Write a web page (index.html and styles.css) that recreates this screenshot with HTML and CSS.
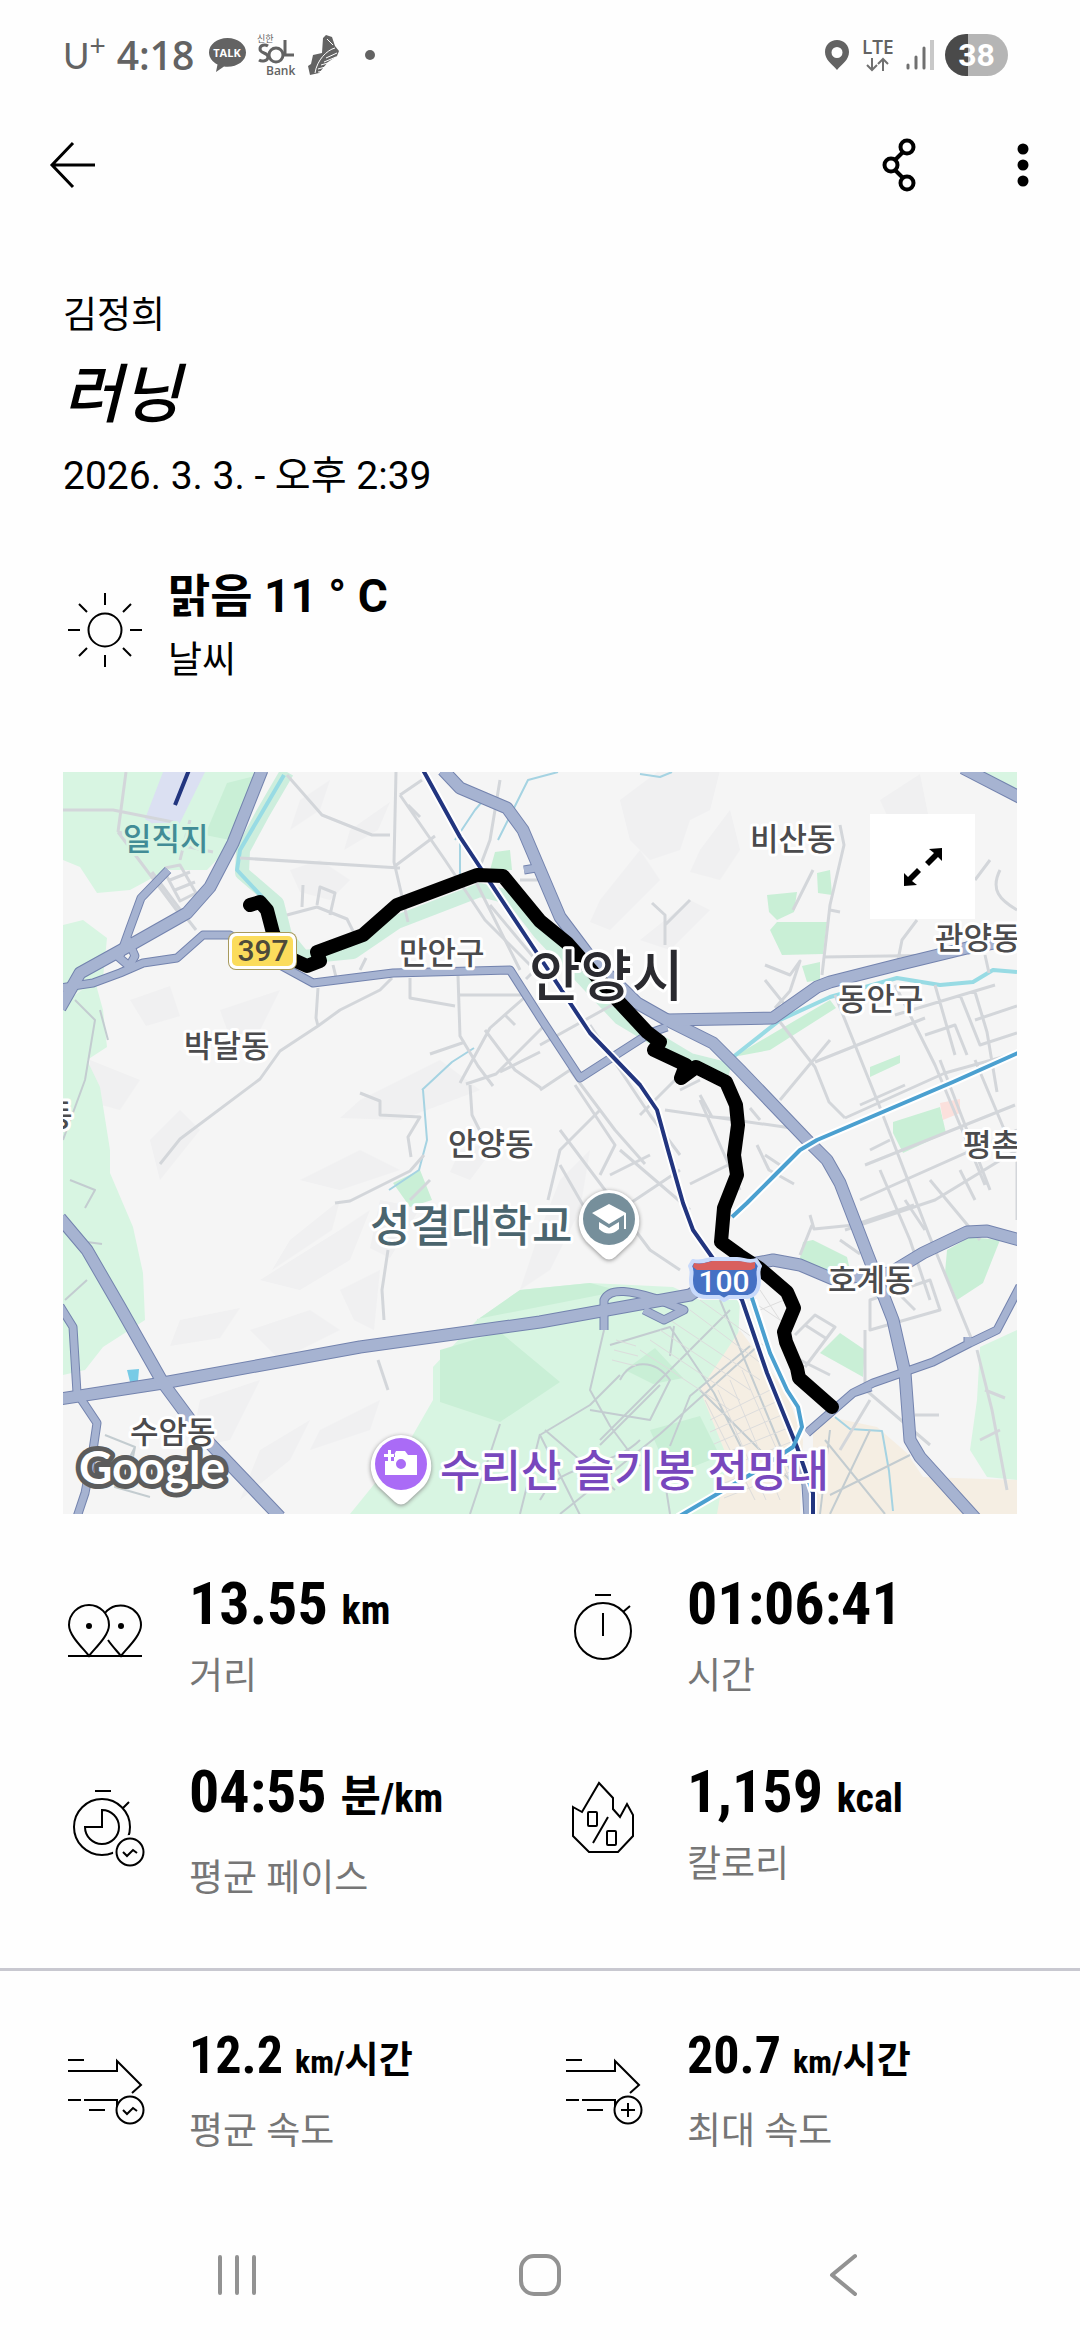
FILE: index.html
```
<!DOCTYPE html>
<html lang="ko">
<head>
  <meta charset="utf-8">
  <meta name="viewport" content="width=device-width">
  <title>러닝</title>
  <link rel="stylesheet" href="styles.css">
</head>
<body>
  <!-- Phone status bar -->
  <div class="status">
    <div class="status-group">
      <span class="carrier">U<sup>+</sup></span>
      <span class="clock">4:18</span>
      <svg class="talk" width="37" height="36" viewBox="0 0 37 36">
        <path fill="#636363" d="M18.500 1C8 1 0 7.500 0 15.500c0 5 3.500 9.500 8.500 12L7 35l8-5.500c12 1.500 22-5 22-14C37 7.500 29 1 18.500 1z"/>
        <text x="18" y="20" font-size="11">TALK</text>
      </svg>
      <svg class="sol" width="40" height="46" viewBox="0 0 40 46">
        <text x="0" y="10" font-size="9">신한</text>
        <path fill="none" stroke="#636363" stroke-width="3" d="M11 14c-3-2-8-1-8 3 0 5 8 3 8 8 0 4-6 5-9 3M28 8v15h9"/>
        <circle cx="19" cy="23" r="7" fill="none" stroke="#636363" stroke-width="3"/>
        <text x="9" y="43" font-size="12" font-weight="600">Bank</text>
      </svg>
      <svg class="shoe" width="32" height="40" viewBox="0 0 32 40">
        <path fill="#636363" d="M15 3l3-3 6 2 3 9 4 5-2 5-9 6-9 11-9 2-2-9 3-2 2-9 9-2z"/>
        <path fill="none" stroke="#fff" stroke-width="1" d="M27 13c-8 2-18 12-20 25M29 18l-11 5M28 22l-12 5M23 27l-10 3M21 31l-11 3M21 35l-11 2M19 4l6 6"/>
      </svg>
      <span class="more-dot"></span>
    </div>
    <div class="status-group">
      <svg width="26" height="32" viewBox="0 0 26 32">
        <path fill="#636363" fill-rule="evenodd" d="M13 1C6 1 1 6 1 13c0 8 7 12 12 18 5-6 12-10 12-18C25 6 20 1 13 1zm0 7a5.500 5.500 0 1 1 0 11 5.500 5.500 0 0 1 0-11z"/>
      </svg>
      <svg class="lte" width="34" height="36" viewBox="0 0 34 36">
        <text x="1" y="17" font-size="19">LTE</text>
        <path fill="none" stroke="#707070" stroke-width="2" d="M11 21v12M6 28l5 5 5-5M22 34V22M17 27l5-5 5 5"/>
      </svg>
      <svg width="28" height="32" viewBox="0 0 28 32">
        <path stroke="#707070" stroke-width="3" stroke-linecap="round" d="M2 26v3M10 18v11M18 9v20"/>
        <path stroke="#c8c8c8" stroke-width="4" d="M26 1v30"/>
      </svg>
      <span class="battery">38</span>
    </div>
  </div>

  <header>
    <button class="icon-btn" aria-label="뒤로">
      <svg width="48" height="48" viewBox="0 0 48 48" fill="none" stroke="#000" stroke-width="3"><path d="M24 2L3 24l21 22M3 24h43"/></svg>
    </button>
    <div class="header-actions">
      <button class="icon-btn" aria-label="공유">
        <svg width="36" height="56" viewBox="0 0 36 56" fill="none" stroke="#000" stroke-width="4"><circle cx="26" cy="10" r="6.500"/><circle cx="10" cy="28" r="6.500"/><circle cx="26" cy="46" r="6.500"/><path d="M14 23l8-8M14 33l8 8"/></svg>
      </button>
      <button class="icon-btn" aria-label="메뉴">
        <svg width="12" height="48" viewBox="0 0 12 48"><circle cx="6" cy="8" r="5.500"/><circle cx="6" cy="24" r="5.500"/><circle cx="6" cy="40" r="5.500"/></svg>
      </button>
    </div>
  </header>

  <main>
    <section class="summary">
      <p class="user">김정희</p>
      <h1>러닝</h1>
      <p class="date">2026. 3. 3. - 오후 2:39</p>
      <div class="weather">
        <svg class="icon" viewBox="0 0 84 84">
          <circle cx="42" cy="42" r="16.500"/>
          <path d="M42 5v12M42 67v12M5 42h12M67 42h12M16 16l8 8M60 60l8 8M16 68l8-8M60 24l8-8"/>
        </svg>
        <div class="weather-text">
          <p class="weather-value">맑음 11 ° C</p>
          <p class="weather-label">날씨</p>
        </div>
      </div>
    </section>

    <section class="map">
      <svg class="map-canvas" viewBox="63 772 954 742">
        <rect x="63" y="772" width="954" height="742" fill="#f5f5f5"/>

        <!-- hills -->
        <g fill="#f0f0f1">
          <path d="M300 800l30-20-10 30-30 20zM350 830l40-28-12 28-34 20zM290 870l30-10 30 20-20 20-30-8zM620 800l40-30h60l-10 40-20 10-10 30-30 10-20-20zM700 850l30-40 10 40-20 30-30-8zM600 900l40-50 20 30-50 50-20-8zM640 940l50-40 20 10-40 40zM880 800l40-26 10 50-30 20z"/>
          <path d="M130 1000l40-14 10 30-34 10zM220 1010l60-20-20 40-30 8zM90 1060l50 20-20 30-30-8zM150 1140l30-30 20 20-40 50zM360 1100l80-40 40 30-80 30-60-2zM300 1180l60-30 40 20-60 20zM290 1240l50-40-8 30-60 40zM260 1280l80-50 30-20-20 50-50 30zM340 1290l40-20-6 60-20-10zM180 1320l60-12-20 30-50 8zM250 1330l60-20 30 20-60 30zM200 1400l60-20-30 60-40 8zM320 1430l60-30-10 30-60 20zM260 1450l50-30-20 40-50 40zM380 1200l40 8-30 50-20-10z"/>
          <path d="M560 1180l30-30-10 60-30 60-30 20 20-60zM460 1150l40-10-30 40-20-8z"/>
        </g>

        <!-- forest, parks and built-up ground -->
        <g fill="#d8f5e2">
          <path d="M63 772h199l-29 71-26 27h-40l-37 20-33 3-17-26-17-7z"/>
          <path d="M63 925l20-5 24 18-4 40-40 22zM63 1003l32-22 8 29 4 37-20 13 13 27 10 63v23l23 54 10 46 2 47-42 27-18 23-22 5z"/>
          <path d="M350 1514l60-74 23-40v-33l44-47 43-30 70-7 83 4 27 13h40l-10 214z"/>
          <path d="M1017 1330l-37 17-3 53-7 50 17 27 30 3z"/>
          <path d="M963 772h54v22z"/>
        </g>
        <g fill="#c9efd6">
          <path d="M227 783l32-8-24 66-30-6z"/>
          <path d="M770 930l7-8 50 0-4 32-41 1zM767 895l30-3-3 20-17 8-8-8zM817 873l13-3 2 25-14-2zM802 966l18-4v18l-13 2zM893 1122l47-15 6 26-43 20-10-20zM870 1067l30-12v8l-30 14zM733 1057l97-57 6 8-66 42zM803 1242l10-2 34 17 3 13-30 8-20-20zM947 1250l23-13 30 3-17 43-26 17-12-27zM840 1333l25 17-2 27-43-24zM490 870l5-18 15-2 2 20zM393 1183l27-13 12 30-22 7zM477 1320l43-30 70-7 30 8-143 28zM625 1370l30-22 28 30-30 6zM440 1350l60-18 60 50-60 40-60-20zM650 1430l50-14 20 40-50 20z"/>
        </g>
        <path fill="#dbe0f2" d="M163 772h42l-32 65-28-18z"/>
        <path fill="#f5eee3" d="M740 1330l-40 60 27 67-10 57h83l3-74-16-47zM813 1430l17-13 47 10 30 26 16 24 94 3v34H813z"/>
        <path fill="#fbe0dc" d="M940 1103l20-4v14l-17 7z"/>
        <path fill="#78cbe6" d="M127 1370l12-1-1 12-8 1z"/>

        <!-- streams -->
        <path class="stream-bank" d="M287 772l-24 41-20 37-1 23 35 30 8 32 18 22 50-5 44-30 83-32 33 8 27 35 80 85 70 42 40 10"/>
        <path class="stream" d="M284 775l-44 75-3 20 28 30M733 1057l47-37 50-23 67-19 43 7 33-3 20-12 24 2"/>
        <path class="brook" d="M422 1090l30-28 22-14M423 1090l4 50-8 30-30 20M455 840l20-30 12-14M460 830v46M835 1417l15 12 32 2 7 40 4 40M640 774l20 3 12-5M498 840l30-60 30-8"/>

        <!-- small streets -->
        <g class="streets">
          <path d="M63 810h50l60 12M126 772l-8 60M118 832l60 80M118 832l95 20M190 820l-10 40M152 872l30 40 14 18M165 868l15-3 16 28-16 8-16-30M170 880l20-8M175 890l20-8"/>
          <path d="M287 775l35 40 50 20h18M396 772l-2 90 14 60M240 858l160 10M395 866l40-30M400 795l45 65 40 60 45 45M400 795l22-15M408 805l12 12M287 915l30-8 30 12 10 20M303 885l-1 22M317 905l3-18 15 6-5 22"/>
          <path d="M318 988l-2 30 2 8-38 25-20 28-80 60-20 25M318 1026l22-16 40-20 12-12M333 965l3 12M360 970l6-12M410 978v20l45 8M458 976l2 60 18 30 15 20M460 995h64M524 998l-34 30-30 55M430 1054l35-12M466 1084l30-10 50-50M485 1030l30 40 26 18M505 1015l10 10M540 1052l-40 20M470 1085l2 30 10 20M360 1093l20 8v14l40 2-12 20 3 20M335 1203l15-2 60-30 14-16M388 1250l-6 40 2 30M378 1360l10 30M430 1180l-20 20"/>
          <path d="M500 780l-10 60-15 40M475 880l45 90M520 880h20M490 905l50 60-14 14"/>
          <path d="M652 903l13 12v30M665 925l25-25M813 870l-10 20-10 20M840 825l4 20-14 60-8 70M765 965l25 10 10-14-10 30-15 17M765 980l20 25M823 957l130-2M917 920l-15 20-6 30M990 860l-15 20M1000 870c-10 20 0 30 17 40M830 910l10 2"/>
          <path d="M540 1090l30-20 45 60 30 34M575 1085l40 60-15 30M540 1045l90-50M590 1025l60 90 30 40M640 1115l40-40M665 1110l140 20M680 1090l20-10M700 1095l12 22 28 2M760 1120l-10-12M600 1110l-40 40-12 50M610 1175l40-20M560 1165l40 70M620 1210l60-40M620 1150l70 60M690 1184l40-20M700 1100l40 90M560 1130l30 40 60 80 30 20"/>
          <path d="M780 1022l35 45 14 35 16 16M815 1062l110-44M780 1100l50-60M845 1118l100-45 72-20M835 995l44 110 50 130 45 110M895 985l40 80 50 120M935 985l20 70M985 955l4 18M960 995l20 50 37-12M975 992l12 40 10 60M895 1015l100-30M975 1020l42-14M925 1035l30-10 12 30M860 1105l45-20M940 1060l50 130M870 1150l20-10M975 1060l42 100M865 1165l150-60M860 1200l157-70M880 1170l30 70 20 60M845 1230l90-30 82-50M905 1200l20 30M930 1180l50 60M960 1170l15 30M1017 1160v60"/>
          <path d="M757 1145l12 25 25 14M780 1165l-15-10M810 1215l4 14 40-4 60-20M812 1225l-12 30M840 1240l20 14M865 1330v58M870 1300l60-20 10 30-70 20zM895 1290l20 20M795 1335l20-20 20 12-30 40M805 1325l22 14M790 1355l40 20M860 1385l70 60M870 1400l-30 50M915 1415h24M977 1350l15 60 15 80M985 1390l20 8M980 1440l20-10"/>
        </g>
        <g class="streets forest-roads">
          <path d="M604 1330l-14 60 20 36 30 40M610 1345l60-18 20 30 24 36 30 60M620 1380c10-20 34-22 50 0l-20 40-60-10M674 1326l-4 30M620 1375l-30 30-50 30 30 60 10 20M545 1430l70 60M600 1440l130-130M600 1445l60-60M670 1446l20-50 60-50M560 1514l100-80 100-90M540 1500c20-40 70-30 100-60M700 1390l90 90M660 1450l10 64M720 1300l70 170M520 1514l20-80M470 1514l30-90"/>
          <path d="M70 1180l25 10-10 18M72 1240l30 4M65 1300l22-20M75 1000l20 20-10 60-22 60M100 1010l8 30"/>
          <path d="M105 1435l30 12-8 40M135 1447l-20 40 35 10M825 1440l60 74M830 1430l-10 84M870 1430l-40 84M910 1455l-80 40"/>
        </g>
        <g class="blocks">
          <path d="M640 1350l90 60M650 1340l90 60M660 1330l90 60M670 1320l90 60M690 1310l80 60M700 1300l70 50M710 1420l60-30M710 1432l70-32M714 1444l70-30M718 1456l70-28M720 1470l76-30M722 1484l76-30M724 1498l76-30M705 1400l50 100M718 1390l48 110M730 1380l50 120M742 1370l48 110"/>
          <path d="M760 1290l20 30M750 1300l36 24M760 1310l24-10M612 1360l24 6M614 1350l24 6M616 1340l20 6"/>
        </g>

        <!-- main roads: dark edge first, fill on top -->
        <defs>
          <g id="wide">
            <path d="M262 770l-29 73-23 44-23 26-60 34-47 26-20 35"/>
            <path d="M443 770l17 18 47 20 16 22 17 40 20 47 30 40 47 46 30 17 46 23 27 27 67 70 20 20 13 23 27 70 26 67 12 53 5 67 10 17 56 62"/>
            <path d="M667 1020l106-2 44-31 13-5 67-17 70-17 53-10"/>
            <path d="M963 768l60 31"/>
            <path d="M60 1399l103-16 197-36 180-25 150-27 40-27 43-8 27 5 33 14 57-6 33-20 44-21 20-1 33 9"/>
            <path d="M60 1218l27 32 33 57 43 76 37 50 80 84"/>
          </g>
          <g id="narrow">
            <path d="M168 870l-27 28-11 30-10 28M127 938l8 18-6 10-14-12"/>
            <path d="M60 988l33-5 27-10 23-10 34-5 26-23h27l50 30 33 18 80-10 117-3 30 47 40 61 70-45 17-6"/>
            <path d="M60 1306l13 21 4 66 20 30-5 34-7 36-8 24"/>
            <path d="M1020 1286l-23 44-27 13-37 19-60 21-20 10-46 40M968 1345v-8M853 1393l18-6"/>
            <path d="M604 1330v-30c6-14 30-8 50-2l30 12-20 10-20-10M800 1455l6 30 2 32"/>
            <path d="M524 870l12-2"/>
          </g>
        </defs>
        <use href="#narrow" class="road-edge narrow"/>
        <use href="#wide" class="road-edge"/>
        <use href="#narrow" class="road narrow"/>
        <use href="#wide" class="road"/>

        <!-- rail lines -->
        <g fill="none">
          <path class="rail-case" d="M423 770l37 67 73 110 57 86 50 52 17 25 11 40 15 53 10 27 19 27 30 43 25 73 30 74 16 46v24M1020 1052l-67 30-136 58-17 10-27 27-26 26-15 14M753 1300l17 53 17 37 11 17 4 20-9 20-40 26-75 44"/>
          <path class="rail" d="M423 770l37 67 73 110 57 86 50 52 17 25 11 40 15 53 10 27 19 27 30 43 25 73 30 74 16 46v24M189 770l-14 35"/>
          <path class="metro" d="M1020 1052l-67 30-136 58-17 10-27 27-26 26-15 14M750 1292l20 61 17 37 11 17 4 20-9 20-40 26-75 44"/>
        </g>

        <!-- recorded run -->
        <path class="route" d="M250 905l10-3 7 8 6 23 10 22 24 11 13-5-3-9 46-17 34-30 80-30 26 1 37 45 27 22 53 60 27 29 13 10-6 8 32 15-5 13 15-11 30 15 10 23 2 20-4 30 3 20-13 33-3 34 18 13 20 13 28 24 7 16-10 24 2 10 11 26 2 10 33 29"/>

        <!-- place names -->
        <g class="place">
          <text x="750" y="850">비산동</text>
          <text x="935" y="949">관양동</text>
          <text x="399" y="964">만안구</text>
          <text x="838" y="1010">동안구</text>
          <text x="184" y="1057">박달동</text>
          <text x="44" y="1126">동</text>
          <text x="448" y="1155">안양동</text>
          <text x="963" y="1156">평촌</text>
          <text x="828" y="1291">호계동</text>
          <text x="130" y="1443">수암동</text>
          <text x="123" y="850" class="water">일직지</text>
        </g>
        <text x="529" y="996" class="city">안양시</text>
        <text x="370" y="1242" class="poi school">성결대학교</text>
        <text x="440" y="1487" class="poi view">수리산 슬기봉 전망대</text>

        <!-- road shields -->
        <rect x="228" y="932" width="69" height="38" rx="8" fill="#a89a5c"/>
        <rect x="229" y="933" width="67" height="36" rx="7" fill="#fff"/>
        <rect x="232" y="936" width="61" height="30" rx="5" fill="#fbdc5c"/>
        <text x="263" y="961" class="shield">397</text>
        <path fill="#4571c4" stroke="#c9dafb" stroke-width="4" d="M693 1261c8 2 14-1 18-2h26c6 0 12 4 19 1l4 6c-3 5-1 9-1 14 0 12-6 18-16 17h-14l-5 3-5-3h-12c-11 0-16-6-16-17 0-5 2-9-1-14z"/>
        <path fill="#d9605e" d="M694 1263c8 2 14-1 18-2h25c6 0 12 3 18 1v6l-4 2h-54l-4-3z"/>
        <text x="724" y="1292" class="shield interstate">100</text>

        <!-- pins -->
        <g class="pin">
          <path fill="#fff" d="M609 1190a31 31 0 0 0-20 54l14 13q6 5 12 0l14-13a31 31 0 0 0-20-54z"/>
          <circle cx="609" cy="1219" r="26" fill="#768f9b"/>
          <path fill="#fff" d="M609 1204l-17 9 17 11 15-9v14h2v-16zM599 1222v7q10 9 20 0v-7l-10 6z"/>
        </g>
        <g class="pin">
          <path fill="#fff" d="M401 1435a31 31 0 0 0-20 54l14 13q6 5 12 0l14-13a31 31 0 0 0-20-54z"/>
          <circle cx="401" cy="1464" r="26" fill="#aa6bf6"/>
          <path fill="#fff" fill-rule="evenodd" d="M396 1451h9l3 4h9v20h-32v-14h9v-6zM401 1459a5 5 0 1 0 0 10 5 5 0 0 0 0-10zM388 1450h3v4h4v3h-4v4h-3v-4h-4v-3h4z"/>
        </g>

        <text x="79" y="1484" class="google">Google</text>
      </svg>
      <button class="expand" aria-label="지도 확대">
        <svg width="42" height="42" viewBox="0 0 42 42"><path d="M40 2v13l-4-4-9 9-4-4 9-9-5-4zM2 40V27l4 4 9-9 4 4-9 9 5 4z"/></svg>
      </button>
    </section>

    <section class="stats">
      <div class="stat">
        <svg class="icon" viewBox="0 0 84 84">
          <path d="M26 71C21 64 6 51 6 40a20 20 0 0 1 40 0c0 11-15 24-20 31zM42 28c12-15 36-6 36 12 0 11-15 24-20 31-4-5-9-10-13-16M5 71h74"/>
          <circle class="dot" cx="26" cy="41" r="3"/><circle class="dot" cx="58" cy="41" r="3"/>
        </svg>
        <div class="stat-text">
          <p class="value">13.55 <small>km</small></p>
          <p class="label">거리</p>
        </div>
      </div>
      <div class="stat">
        <svg class="icon" viewBox="0 0 84 84">
          <circle cx="42" cy="46" r="28"/>
          <path d="M34 10h16M42 28v23M62 27l7-6"/>
        </svg>
        <div class="stat-text">
          <p class="value">01:06:41</p>
          <p class="label">시간</p>
        </div>
      </div>
      <div class="stat">
        <svg class="icon" viewBox="0 0 84 84">
          <circle cx="39" cy="47" r="28"/>
          <path d="M32 11h16M39 47V30a17 17 0 1 1-17 17zM60 28l6-6"/>
          <circle class="cut" cx="67" cy="72" r="17"/>
          <circle cx="67" cy="72" r="13.500"/>
          <path d="M60 72l4 4 6-6 4 3"/>
        </svg>
        <div class="stat-text">
          <p class="value tall">04:55 <small><span class="unit-ko">분</span>/km</small></p>
          <p class="label">평균 페이스</p>
        </div>
      </div>
      <div class="stat">
        <svg class="icon" viewBox="0 0 84 84">
          <path d="M12 34l9 5 17-29 14 15v11l7 8 7-13 6 11v21L57 79H28L12 63zM47 44L32 70"/>
          <rect x="27" y="39" width="9" height="14" rx="1"/><rect x="46" y="58" width="9" height="14" rx="1"/>
        </svg>
        <div class="stat-text">
          <p class="value">1,159 <small>kcal</small></p>
          <p class="label">칼로리</p>
        </div>
      </div>
    </section>

    <section class="stats speeds">
      <div class="stat">
        <svg class="icon" viewBox="0 0 84 84">
          <path d="M5 17h16M5 28h49V18l24 24-9 8M5 57h13M21 57h33v8M26 67h16"/>
          <circle class="cover" cx="67" cy="67" r="13.500"/>
          <path d="M60 67l4 4 6-6 4 3"/>
        </svg>
        <div class="stat-text">
          <p class="value">12.2 <small>km/<span class="unit-ko">시간</span></small></p>
          <p class="label">평균 속도</p>
        </div>
      </div>
      <div class="stat">
        <svg class="icon" viewBox="0 0 84 84">
          <path d="M5 17h16M5 28h49V18l24 24-9 8M5 57h13M21 57h33v8M26 67h16"/>
          <circle class="cover" cx="67" cy="67" r="13.500"/>
          <path d="M60 67h14M67 60v14"/>
        </svg>
        <div class="stat-text">
          <p class="value">20.7 <small>km/<span class="unit-ko">시간</span></small></p>
          <p class="label">최대 속도</p>
        </div>
      </div>
    </section>
  </main>

  <nav>
    <button aria-label="최근 앱"><svg width="42" height="42" viewBox="0 0 42 42"><path d="M4 3v36M21 3v36M38 3v36"/></svg></button>
    <button aria-label="홈"><svg width="44" height="44" viewBox="0 0 44 44"><rect x="3" y="3" width="38" height="38" rx="13"/></svg></button>
    <button aria-label="뒤로"><svg width="28" height="44" viewBox="0 0 28 44"><path d="M26 3L3 22l23 19"/></svg></button>
  </nav>
</body>
</html>
```

FILE: styles.css
```
* {
  box-sizing: border-box;
}
body {
  margin: 0;
  min-height: 100vh;
  display: flex;
  flex-direction: column;
  background-color: #fefefe;
  color: #000;
  font-family: Roboto, "Noto Sans CJK KR", sans-serif;
}
p, h1 {
  margin: 0;
}
button {
  padding: 0;
  border: none;
  background: none;
  cursor: pointer;
}
svg {
  display: block;
}

/* Status bar */
.status {
  display: flex;
  justify-content: space-between;
  align-items: center;
  height: 110px;
  padding: 0 72px 0 63px;
  color: #636363;
}
.status-group {
  display: flex;
  align-items: center;
  gap: 11px;
}
.status svg {
  overflow: visible;
}
.status text {
  fill: #636363;
  font-family: "Open Sans", "Noto Sans CJK KR", sans-serif;
}
.carrier {
  font-family: Lato, sans-serif;
  font-size: 36px;
  line-height: 40px;
}
.carrier sup {
  font-size: 28px;
  line-height: 0;
}
.clock {
  margin-right: 4px;
  font-family: "Open Sans", sans-serif;
  font-size: 39px;
  font-weight: 600;
  line-height: 40px;
}
.status .talk text {
  fill: #fff;
  font-weight: bold;
  text-anchor: middle;
}
.status .lte text {
  font-weight: 600;
}
.more-dot {
  width: 10px;
  height: 10px;
  margin-left: 14px;
  border-radius: 50%;
  background-color: #636363;
}
.battery {
  width: 63px;
  height: 42px;
  border-radius: 21px;
  background: linear-gradient(to right, #4a4a4a 37%, #b5b5b5 37%);
  color: #fff;
  font-size: 32px;
  font-weight: bold;
  line-height: 42px;
  text-align: center;
}

/* Top bar */
header {
  display: flex;
  justify-content: space-between;
  align-items: center;
  height: 110px;
  padding: 0 51px 0 49px;
}
.header-actions {
  display: flex;
  align-items: center;
  gap: 100px;
}

/* Title and weather */
.summary {
  padding: 68px 63px 0;
}
.user {
  font-size: 37px;
  line-height: 56px;
}
h1 {
  font-size: 64px;
  font-style: italic;
  font-weight: 500;
  line-height: 104px;
}
.date {
  font-size: 39px;
  line-height: 56px;
}
.weather {
  display: flex;
  align-items: center;
  gap: 21px;
  margin-top: 56px;
}
.weather-text {
  padding-bottom: 10px;
}
.weather-value {
  font-size: 46px;
  font-weight: bold;
  line-height: 72px;
}
.weather-label {
  font-size: 37px;
  line-height: 58px;
}
.icon {
  flex: none;
  width: 84px;
  height: 84px;
  overflow: visible;
  fill: none;
  stroke: #000;
  stroke-width: 2;
}
.icon .dot {
  fill: #000;
  stroke: none;
}
.icon .cut {
  fill: #fefefe;
  stroke: none;
}
.icon .cover {
  fill: #fefefe;
}

/* Map */
.map {
  position: relative;
  margin: 72px 63px 0;
}
.map-canvas {
  width: 100%;
}
.expand {
  position: absolute;
  top: 42px;
  right: 42px;
  display: flex;
  justify-content: center;
  align-items: center;
  width: 105px;
  height: 105px;
  background-color: #fff;
}
.map path {
  stroke-linejoin: round;
}
.stream-bank {
  fill: none;
  stroke: #cdeedd;
  stroke-width: 14;
}
.stream {
  fill: none;
  stroke: #98dbe4;
  stroke-width: 4;
}
.brook {
  fill: none;
  stroke: #a5d3e2;
  stroke-width: 2;
}
.streets {
  fill: none;
  stroke: #d3d6da;
  stroke-width: 3;
}
.forest-roads {
  stroke: #c3ccd0;
  stroke-width: 2;
}
.blocks {
  fill: none;
  stroke: #dcdcdc;
  stroke-width: 1;
}
.road-edge {
  fill: none;
  stroke: #7383ae;
  stroke-width: 13;
}
.road {
  fill: none;
  stroke: #a6b3d1;
  stroke-width: 11;
}
.road-edge.narrow {
  stroke-width: 9;
}
.road.narrow {
  stroke-width: 7;
}
.rail-case {
  stroke: #fff;
  stroke-width: 8;
}
.rail {
  stroke: #22357f;
  stroke-width: 4;
}
.metro {
  stroke: #4ba0d0;
  stroke-width: 4;
}
.route {
  fill: none;
  stroke: #000;
  stroke-width: 14;
  stroke-linecap: round;
}
.map text {
  font-family: "Noto Sans CJK KR", sans-serif;
  font-weight: 500;
  paint-order: stroke;
  stroke: #fff;
  stroke-width: 6;
  stroke-linejoin: round;
}
.place {
  fill: #4b4b4d;
  font-size: 31px;
}
.place .water {
  fill: #428c96;
  stroke: #d8f5e2;
}
.map .city {
  fill: #2b2b30;
  font-size: 56px;
}
.poi {
  font-size: 44px;
}
.school {
  fill: #4b656e;
}
.view {
  fill: #7847bd;
}
.map .shield {
  fill: #4e4a3a;
  font-family: Roboto, sans-serif;
  font-size: 30px;
  text-anchor: middle;
  stroke: none;
}
.map .interstate {
  fill: #fff;
}
.pin {
  filter: drop-shadow(0 1px 2px #888);
}
.map .google {
  fill: #fff;
  font-family: Lato, sans-serif;
  font-size: 46px;
  font-weight: bold;
  stroke: #5c5c5c;
  stroke-width: 10;
}

/* Stats */
.stats {
  display: grid;
  grid-template-columns: 1fr 1fr;
  align-items: start;
  row-gap: 30px;
  padding: 34px 21px 60px 63px;
}
.stat {
  display: flex;
  align-items: center;
  gap: 42px;
}
.stat-text {
  padding-top: 12px;
}
.value {
  font-family: "Roboto Condensed", "Liberation Sans Narrow", "Noto Sans CJK KR", sans-serif;
  font-size: 60px;
  font-weight: bold;
  line-height: 88px;
}
.value small {
  font-size: 40px;
  line-height: 1;
}
.value .unit-ko {
  font-size: 44px;
}
.tall {
  padding-bottom: 14px;
}
.label {
  color: #767676;
  font-size: 37px;
  line-height: 58px;
}
.speeds {
  border-top: 3px solid #c8c8d0;
  padding: 38px 21px 40px 63px;
}
.speeds .stat-text {
  padding-top: 0;
}
.speeds .value {
  font-size: 52px;
  line-height: 94px;
}
.speeds small {
  font-size: 32px;
}
.speeds .unit-ko {
  font-size: 37px;
}

/* Phone navigation */
nav {
  display: grid;
  grid-template-columns: repeat(3, 1fr);
  align-items: center;
  height: 130px;
  margin-top: auto;
  padding: 0 85px;
}
nav button {
  display: flex;
  justify-content: center;
}
nav svg {
  fill: none;
  stroke: #929292;
  stroke-width: 4;
  stroke-linecap: round;
  stroke-linejoin: round;
}
```
